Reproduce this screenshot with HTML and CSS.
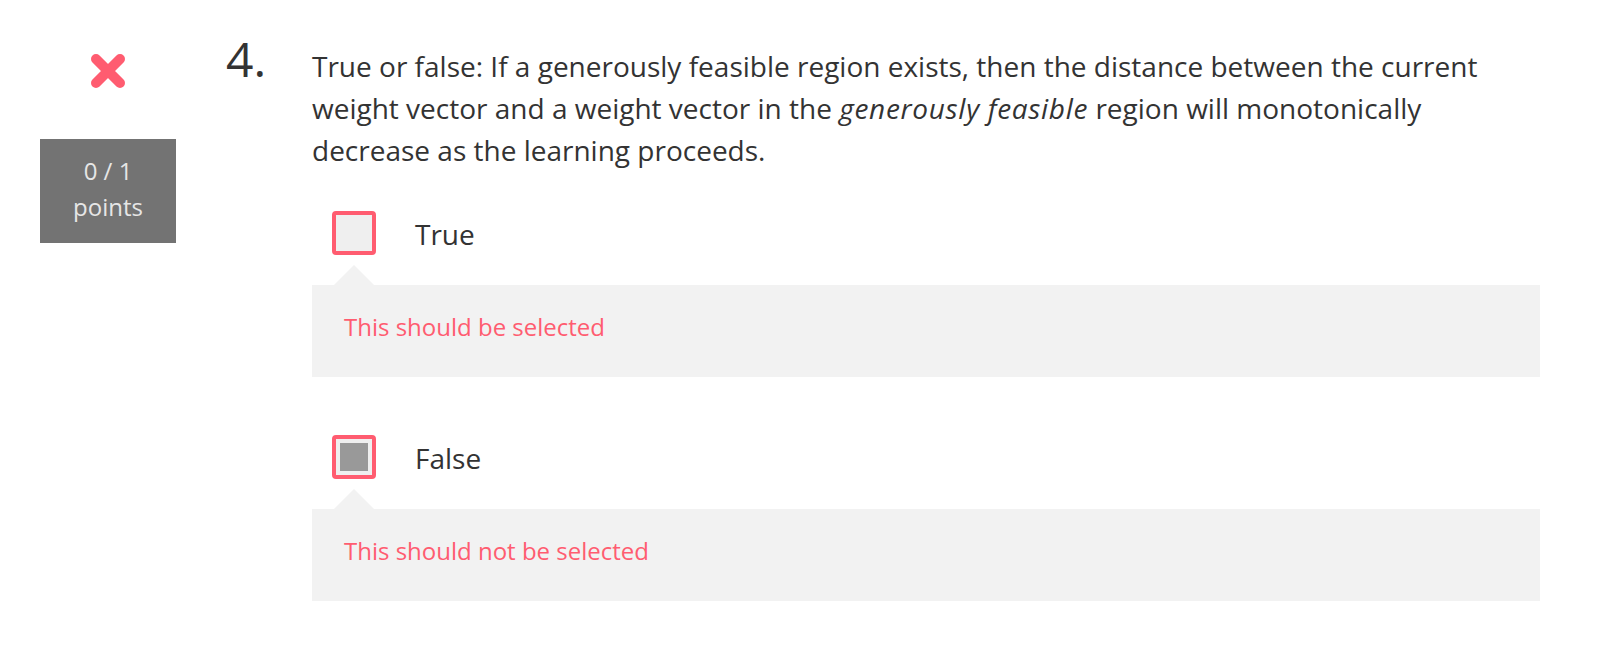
FILE: index.html
```html
<!DOCTYPE html>
<html lang="en">
<head>
<meta charset="utf-8">
<title>Question 4</title>
<link rel="stylesheet" href="styles.css">
</head>
<body>
<div class="question">
  <div class="status">
    <svg class="wrong-icon" width="34" height="34" viewBox="0 0 34 34" aria-label="Incorrect">
      <path d="M5 5 L29 29 M29 5 L5 29" stroke="#ff5c70" stroke-width="10" stroke-linecap="round" fill="none"/>
    </svg>
    <div class="score">0 / 1<br>points</div>
  </div>
  <div class="number">4.</div>
  <div class="content">
    <p class="prompt">True or false: If a generously feasible region exists, then the distance between the current weight vector and a weight vector in the <em>generously feasible</em> region will monotonically decrease as the learning proceeds.</p>
    <div class="option">
      <div class="choice">
        <span class="checkbox"></span>
        <span class="label">True</span>
      </div>
      <div class="feedback">This should be selected</div>
    </div>
    <div class="option second">
      <div class="choice">
        <span class="checkbox checked"></span>
        <span class="label">False</span>
      </div>
      <div class="feedback">This should not be selected</div>
    </div>
  </div>
</div>
</body>
</html>
```

FILE: styles.css
```css
html, body {
  margin: 0;
  padding: 0;
  background: #ffffff;
}

body {
  font-family: "Open Sans", "Liberation Sans", sans-serif;
  color: #333333;
}

.question {
  display: flex;
  align-items: flex-start;
  width: 1600px;
}

.status {
  width: 216px;
  flex: none;
  display: flex;
  flex-direction: column;
  align-items: center;
  padding-top: 54px;
}

.wrong-icon {
  display: block;
}

.score {
  margin-top: 51px;
  width: 136px;
  height: 104px;
  box-sizing: border-box;
  padding-top: 14px;
  background: #737373;
  color: #e6e6e6;
  font-size: 24px;
  font-weight: 400;
  line-height: 36px;
  text-align: center;
}

.number {
  width: 96px;
  flex: none;
  padding-left: 10px;
  box-sizing: border-box;
  margin-top: 35px;
  font-size: 48px;
  font-weight: 400;
  line-height: 48px;
  color: #333333;
}

.content {
  width: 1228px;
  flex: none;
  padding-top: 45px;
}

.prompt {
  margin: 0 30px 0 0;
  font-size: 28px;
  line-height: 42px;
  color: #333333;
}

.prompt em {
  font-style: italic;
  letter-spacing: 0.7px;
}

.option {
  margin-top: 40px;
}

.option.second {
  margin-top: 58px;
}

.choice {
  display: flex;
  align-items: center;
  height: 44px;
  padding-left: 20px;
}

.checkbox {
  width: 44px;
  height: 44px;
  box-sizing: border-box;
  border: 4px solid #ff5c70;
  border-radius: 4px;
  background: #efefef;
  flex: none;
  display: flex;
  align-items: center;
  justify-content: center;
}

.checkbox.checked::after {
  content: "";
  width: 28px;
  height: 28px;
  background: #999999;
}

.label {
  margin-left: 39px;
  font-size: 28px;
  line-height: 42px;
  padding-top: 2px;
  color: #333333;
}

.feedback {
  position: relative;
  margin-top: 30px;
  height: 92px;
  box-sizing: border-box;
  padding: 24px 30px 0 32px;
  background: #f2f2f2;
  color: #ff5c70;
  font-size: 24px;
  line-height: 36px;
}

.feedback::before {
  content: "";
  position: absolute;
  left: 22px;
  top: -20px;
  width: 0;
  height: 0;
  border-left: 20px solid transparent;
  border-right: 20px solid transparent;
  border-bottom: 20px solid #f2f2f2;
}
```
